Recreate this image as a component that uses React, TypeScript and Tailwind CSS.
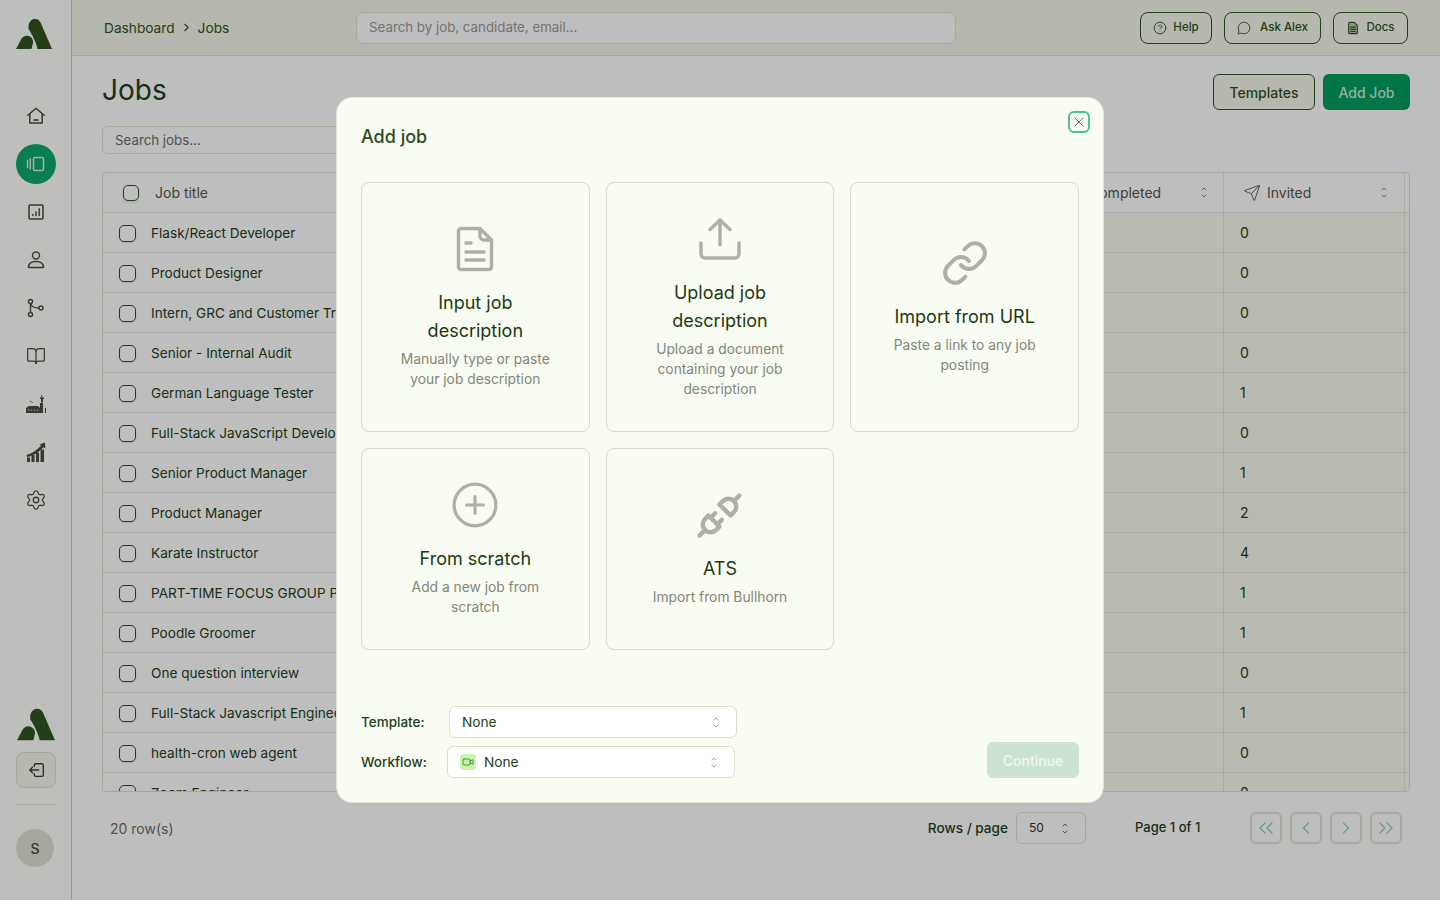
import React from 'react';
import { CircleHelp, MessageCircle, X, Send, BookOpen, Settings, ChevronLeft, ChevronRight, ChevronsLeft, ChevronsRight, Link as LinkIcon, CirclePlus, Video, ChevronUp, ChevronDown } from 'lucide-react';
import { TbPlugConnected } from 'react-icons/tb';

function Logo({ className }: { className: string }) {
  return (
    <svg viewBox="0 0 36 30" className={className} fill="#2f5520">
      <path d="M12.5 6.5C13.5 2 16 0 19 0c3 0 5 1.800 6 4.500L36 30H21.500C20.500 24 16 15 12.500 10Z" />
      <path d="M0 30L5 20.500C6.500 17.500 9 16.500 11.500 16.800 15.500 17.300 17.500 20.500 17 24L15.500 30Z" />
    </svg>
  );
}

function Sort({ className = '' }: { className?: string }) {
  return (
    <span className={`flex flex-col items-center ${className}`}>
      <ChevronUp size={8} strokeWidth={2} className="-mb-[1px]" />
      <ChevronDown size={8} strokeWidth={2} />
    </span>
  );
}

const navIcon = 'w-5 h-5';
const Home = () => (
  <svg viewBox="0 0 20 20" className={navIcon} fill="none" stroke="#4a4a44" strokeWidth="1.500" strokeLinejoin="round" strokeLinecap="round">
    <path d="M1.800 9.200 10 2.200l8.200 7" /><path d="M3.800 8v9h12.400V8" /><path d="M8 14h4" />
  </svg>
);
const Cards = () => (
  <svg viewBox="0 0 20 20" className={navIcon} fill="none" stroke="#d7ebe0" strokeWidth="1.500" strokeLinejoin="round" strokeLinecap="round">
    <rect x="7.500" y="3.500" width="10" height="13" rx="1.500" /><path d="M4.300 5v10M1.500 6.500v7" />
  </svg>
);
const Report = () => (
  <svg viewBox="0 0 20 20" className={navIcon} fill="none" stroke="#4a4a44" strokeWidth="1.500" strokeLinecap="round" strokeLinejoin="round">
    <rect x="3" y="3" width="14" height="14" rx="1.200" /><path d="M6.800 13.500v-1M10 13.500v-3.500M13.200 13.500V6.800" />
  </svg>
);
const Person = () => (
  <svg viewBox="0 0 20 20" className={navIcon} fill="none" stroke="#4a4a44" strokeWidth="1.400" strokeLinejoin="round">
    <circle cx="10" cy="5.500" r="3.500" /><path d="M2.500 17.500c0-4 3.300-6 7.500-6s7.500 2 7.500 6Z" />
  </svg>
);
const Branch = () => (
  <svg viewBox="0 0 20 20" className={navIcon} fill="none" stroke="#4a4a44" strokeWidth="1.400">
    <circle cx="4.500" cy="3.500" r="2" /><circle cx="4.500" cy="16.500" r="2" /><circle cx="15" cy="10" r="2" />
    <path d="M4.500 5.500v9M4.800 5.500c.5 3 4 4.500 8.200 4.500" />
  </svg>
);
const Factory = () => (
  <svg viewBox="0 0 20 20" className={navIcon} fill="#4a4a44">
    <path d="M0 19v-5l3-2h9l2 2V9h3v10Z" />
    <path d="M15 8.500V5h-1V3.500h1.300V1h.9v2.500H18V5h-1v3.500Z" />
    <path d="m4 6.500 3 2-.4.500-3-2Z" />
    <path d="M19 14h1v5h-1Z" />
    <rect x="2" y="15.500" width="1.400" height="1.400" fill="#bbb" /><rect x="5" y="15.500" width="1.400" height="1.400" fill="#bbb" /><rect x="8" y="15.500" width="1.400" height="1.400" fill="#bbb" /><rect x="11" y="15.500" width="1.400" height="1.400" fill="#bbb" />
  </svg>
);
const Growth = () => (
  <svg viewBox="0 0 20 20" className={navIcon} fill="#4a4a44">
    <path d="M1 15.500h3V20H1ZM5.500 13h3v7h-3ZM10 10.500h3V20h-3ZM14.500 7.500h3.500V20h-3.500Z" />
    <path d="M.5 13C6 11.500 11 8 15 3.500l-1.500-1L19 .5l.3 6-1.800-1.300C13 10 8 13.500 1 15Z" />
  </svg>
);
const Logout = () => (
  <svg viewBox="0 0 20 20" className="w-[18px] h-[18px] ml-[3px]" fill="none" stroke="#3a3a35" strokeWidth="1.500" strokeLinecap="round" strokeLinejoin="round">
    <path d="M7 6V4.500A1.500 1.500 0 0 1 8.500 3h7A1.500 1.500 0 0 1 17 4.500v11a1.500 1.500 0 0 1-1.500 1.500h-7A1.500 1.500 0 0 1 7 15.500V14" />
    <path d="M12 10H2M5 7l-3 3 3 3" />
  </svg>
);
const DocFilled = () => (
  <svg viewBox="0 0 16 16" className="w-[14px] h-[14px]" fill="none" stroke="#2f5520" strokeWidth="1.300" strokeLinecap="round" strokeLinejoin="round">
    <path d="M4 1.500h5.500L13 5v8a1.500 1.500 0 0 1-1.500 1.500h-7A1.500 1.500 0 0 1 3 13V3a1.500 1.500 0 0 1 1-1.500Z" fill="#b4c2a8" /><path d="M5.500 7h5M5.500 9.500h5M5.500 12h5" />
  </svg>
);
const FileDoc = () => (
  <svg viewBox="0 0 48 48" className="w-12 h-12" fill="none" stroke="#adb1a3" strokeWidth="3.400" strokeLinecap="round" strokeLinejoin="round">
    <path d="M10.500 3.500H29L40.500 15v27a2.500 2.500 0 0 1-2.500 2.500H10.500A2.500 2.500 0 0 1 7.500 42V6a2.500 2.500 0 0 1 3-2.500Z" />
    <path d="M29 3.500V11a4 4 0 0 0 4 4h7.500" /><path d="M15 18h5M15 27h18M15 35h18" />
  </svg>
);
const Upload = () => (
  <svg viewBox="0 0 48 48" className="w-12 h-12" fill="none" stroke="#adb1a3" strokeWidth="3.400" strokeLinecap="round" strokeLinejoin="round">
    <path d="M24 30V5M14 14.500 24 5l10 9.500" /><path d="M5 28v11a4 4 0 0 0 4 4h30a4 4 0 0 0 4-4V28" />
  </svg>
);

const rows: [string, string][] = [
  ['Flask/React Developer', '0'], ['Product Designer', '0'], ['Intern, GRC and Customer Trust', '0'], ['Senior - Internal Audit', '0'],
  ['German Language Tester', '1'], ['Full-Stack JavaScript Developer', '0'], ['Senior Product Manager', '1'], ['Product Manager', '2'],
  ['Karate Instructor', '4'], ['PART-TIME FOCUS GROUP PANEL', '1'], ['Poodle Groomer', '1'], ['One question interview', '0'],
  ['Full-Stack Javascript Engineer', '1'], ['health-cron web agent', '0'], ['Zoom Engineer', '0'],
];

function Box({ className = '' }: { className?: string }) {
  return <span className={`block rounded-[5px] border border-[#2f5520] shadow-sm shrink-0 ${className}`} />;
}

function Card({ icon, title, desc }: { icon: React.ReactNode; title: React.ReactNode; desc: React.ReactNode }) {
  return (
    <div className="flex flex-col items-center justify-center text-center border border-[#d8dac5] rounded-lg py-8 px-4">
      <div className="w-12 h-12 flex items-center justify-center">{icon}</div>
      <div className="mt-4 text-[18px] leading-7 text-[#1c3a12] font-normal">{title}</div>
      <div className="mt-1 text-[13.8px] leading-5 text-[#82867a]">{desc}</div>
    </div>
  );
}

function PageBtn({ children }: { children: React.ReactNode }) {
  return <div className="w-8 h-8 rounded-md border-2 border-[#e3e4d3] flex items-center justify-center text-[#8cd0b0]">{children}</div>;
}

function TopBtn({ icon, label, className }: { icon: React.ReactNode; label: string; className: string }) {
  return (
    <div className={`h-8 rounded-lg border border-[#2f5520] flex items-center justify-center text-[11.5px] font-medium text-[#2f5520] ${className}`}>
      {icon}<span className="pt-px">{label}</span>
    </div>
  );
}

export default function App() {
  return (
    <div className="relative flex w-[1440px] h-[900px] overflow-hidden bg-[#fefefe] text-[#26461b] [font-family:Inter,'Noto_Sans',sans-serif]">
      <aside className="w-[72px] shrink-0 border-r border-[#c9c9c0] bg-[#fefffc] flex flex-col items-center pt-[19px] pb-[33px]">
        <Logo className="w-9 h-[30px] mr-[4px]" />
        <nav className="mt-[47px] flex flex-col items-center gap-2">
          {[<Home />, <Cards />, <Report />, <Person />, <Branch />, <BookOpen size={20} strokeWidth={1.500} color="#4a4a44" />, <Factory />, <Growth />, <Settings size={22} strokeWidth={1.400} color="#4a4a44" />].map((ic, i) => (
            <div key={i} className={`w-10 h-10 rounded-full flex items-center justify-center ${i === 1 ? 'bg-[#0daa6c]' : ''}`}>{ic}</div>
          ))}
        </nav>
        <div className="mt-auto flex flex-col items-center">
          <Logo className="w-[38px] h-[33px]" />
          <div className="mt-[11px] w-10 h-9 rounded-lg border border-[#dfe0cc] bg-[#f5f6ee] flex items-center justify-center"><Logout /></div>
          <div className="mt-4 w-10 h-px bg-[#dfe0cc]" />
          <div className="mt-6 w-[38px] h-[38px] rounded-full bg-[#dedfd4] flex items-center justify-center text-[14px] font-medium text-[#4a4a44] mr-[1px]">S</div>
        </div>
      </aside>

      <div className="flex-1 min-w-0 flex flex-col">
        <header className="h-14 shrink-0 border-b border-[#dfe0cc] bg-[#f3f4e9] flex items-center pl-8 pr-8">
          <div className="w-[252px] flex items-center gap-[5px] pt-px text-[13.7px] text-[#2f5520]">
            <span>Dashboard</span><ChevronRight size={13} strokeWidth={2} /><span>Jobs</span>
          </div>
          <div className="w-[600px] h-8 rounded-lg border border-[#dfe0cc] bg-[#fefefe] px-3 pt-px flex items-center text-[13.3px] text-[#9a9a94]">Search by job, candidate, email...</div>
          <div className="ml-auto flex items-center gap-3">
            <TopBtn className="w-[72px] gap-[6px]" icon={<CircleHelp size={14} strokeWidth={1.500} />} label="Help" />
            <TopBtn className="w-[97px] gap-[9px]" icon={<MessageCircle size={14} strokeWidth={1.500} />} label="Ask Alex" />
            <TopBtn className="w-[75px] gap-[6px]" icon={<DocFilled />} label="Docs" />
          </div>
        </header>

        <main className="flex-1 min-h-0 px-[30px] pt-[18px]">
          <div className="flex items-center h-9">
            <h1 className="text-[28px] leading-9 text-[#22401a] font-normal pb-1">Jobs</h1>
            <div className="ml-auto flex gap-2">
              <div className="w-[102px] h-9 rounded-md border border-[#2f5520] bg-[#f3f4e9] flex items-center justify-center text-[14px] font-medium text-[#2f5520]">Templates</div>
              <div className="w-[87px] h-9 rounded-md bg-[#009c5e] flex items-center justify-center text-[14px] font-medium text-[#c8e6d8]">Add Job</div>
            </div>
          </div>
          <div className="mt-4 w-[420px] h-7 rounded-md border border-[#dfe0cc] px-3 pt-px flex items-center text-[13.3px] text-[#6e6e68]">Search jobs...</div>

          <div className="mt-[18px] h-[620px] rounded-[4px] border border-[#dfe0cc] overflow-hidden">
            <div className="h-10 grid grid-cols-[941px_180px_181px_1fr] border-b border-[#e6e7d8] text-[14px] text-[#55554f]">
              <div className="flex items-center pl-5 gap-4"><Box className="w-4 h-4" /><span>Job title</span></div>
              <div className="flex items-center pl-[45px] pr-[15px] border-r border-[#e6e7d8]"><span>Completed</span><Sort className="ml-auto" /></div>
              <div className="flex items-center pl-[19px] pr-4 border-r border-[#e6e7d8]"><Send size={18} strokeWidth={1.200} /><span className="ml-[6px]">Invited</span><Sort className="ml-auto" /></div>
              <div />
            </div>
            {rows.map(([t, n]) => (
              <div key={t} className="h-10 grid grid-cols-[941px_180px_181px_1fr] border-b border-[#e6e7d8] text-[13.6px] text-[#22401a]">
                <div className="flex items-center pl-4 pt-px gap-[15px] bg-[#fefefe]"><Box className="w-[17px] h-[17px]" /><span className="whitespace-nowrap">{t}</span></div>
                <div className="bg-[#f7f8ed] border-r border-[#e6e7d8]" />
                <div className="bg-[#f7f8ed] flex items-center pl-4 border-r border-[#e6e7d8] text-[14px]">{n}</div>
                <div className="bg-[#f7f8ed]" />
              </div>
            ))}
          </div>

          <div className="mt-5 h-8 flex items-center pl-2 pr-2 text-[14px]">
            <span className="text-[#6e6e68]">20 row(s)</span>
            <div className="ml-auto flex items-center">
              <span className="text-[13.6px] font-medium text-[#22401a]">Rows / page</span>
              <div className="ml-2 w-[70px] h-8 rounded-md border border-[#dfe0cc] flex items-center pl-3 pr-4 text-[12px] text-[#33332f]"><span>50</span><Sort className="ml-auto" /></div>
              <span className="ml-[49px] w-[115px] text-[13px] font-medium text-[#22401a]">Page 1 of 1</span>
              <div className="flex gap-2">
                <PageBtn><ChevronsLeft size={24} strokeWidth={1.300} className="shrink-0" /></PageBtn>
                <PageBtn><ChevronLeft size={20} strokeWidth={1.400} className="shrink-0" /></PageBtn>
                <PageBtn><ChevronRight size={20} strokeWidth={1.400} className="shrink-0" /></PageBtn>
                <PageBtn><ChevronsRight size={24} strokeWidth={1.300} className="shrink-0" /></PageBtn>
              </div>
            </div>
          </div>
        </main>
      </div>

      <div className="absolute inset-0 bg-black/25" />

      <div className="absolute left-[336px] top-[97px] w-[768px] rounded-2xl border border-[#e2e4d2] bg-[#f9fcf3] p-6">
        <div className="h-7 flex items-center text-[18px] font-medium text-[#2a4d1e]">Add job</div>
        <div className="absolute right-[13px] top-[13px] w-[22px] h-[22px] rounded-md border-2 border-[#4fbf94] flex items-center justify-center text-[#4a5a44]"><X size={16} strokeWidth={1.300} className="shrink-0" /></div>
        <div className="mt-8 grid grid-cols-3 gap-4">
          <Card icon={<FileDoc />} title={<>Input job<br />description</>} desc={<>Manually type or paste<br />your job description</>} />
          <Card icon={<Upload />} title={<>Upload job<br />description</>} desc={<>Upload a document<br />containing your job<br />description</>} />
          <Card icon={<LinkIcon size={48} strokeWidth={2} color="#adb1a3" className="shrink-0" />} title="Import from URL" desc={<>Paste a link to any job<br />posting</>} />
          <Card icon={<CirclePlus size={50} strokeWidth={1.550} color="#adb1a3" className="shrink-0" />} title="From scratch" desc={<>Add a new job from<br />scratch</>} />
          <Card icon={<TbPlugConnected size={53} strokeWidth={2} color="#adb1a3" className="shrink-0" />} title="ATS" desc="Import from Bullhorn" />
        </div>
        <div className="mt-14 flex items-end justify-between">
          <div className="flex flex-col gap-2 text-[13.5px] font-medium text-[#22401a]">
            <div className="flex items-center">
              <span className="w-[88px]">Template:</span>
              <div className="w-[288px] h-8 rounded-md border border-[#dddfca] bg-white flex items-center pl-3 pr-4 font-normal text-[13.7px]"><span>None</span><Sort className="ml-auto text-[#6e6e68]" /></div>
            </div>
            <div className="flex items-center">
              <span className="w-[86px]">Workflow:</span>
              <div className="w-[288px] h-8 rounded-md border border-[#dddfca] bg-white flex items-center pl-3 pr-4 font-normal text-[13.7px]">
                <span className="w-4 h-4 rounded-[4px] bg-[#c5f7a8] flex items-center justify-center mr-2 text-[#3f8a34]"><Video size={12} strokeWidth={1.800} /></span>
                <span>None</span><Sort className="ml-auto text-[#6e6e68]" />
              </div>
            </div>
          </div>
          <div className="w-[92px] h-9 rounded-md bg-[#cce3d4] flex items-center justify-center text-[14px] font-medium text-[#f1f7ee]">Continue</div>
        </div>
      </div>
    </div>
  );
}
